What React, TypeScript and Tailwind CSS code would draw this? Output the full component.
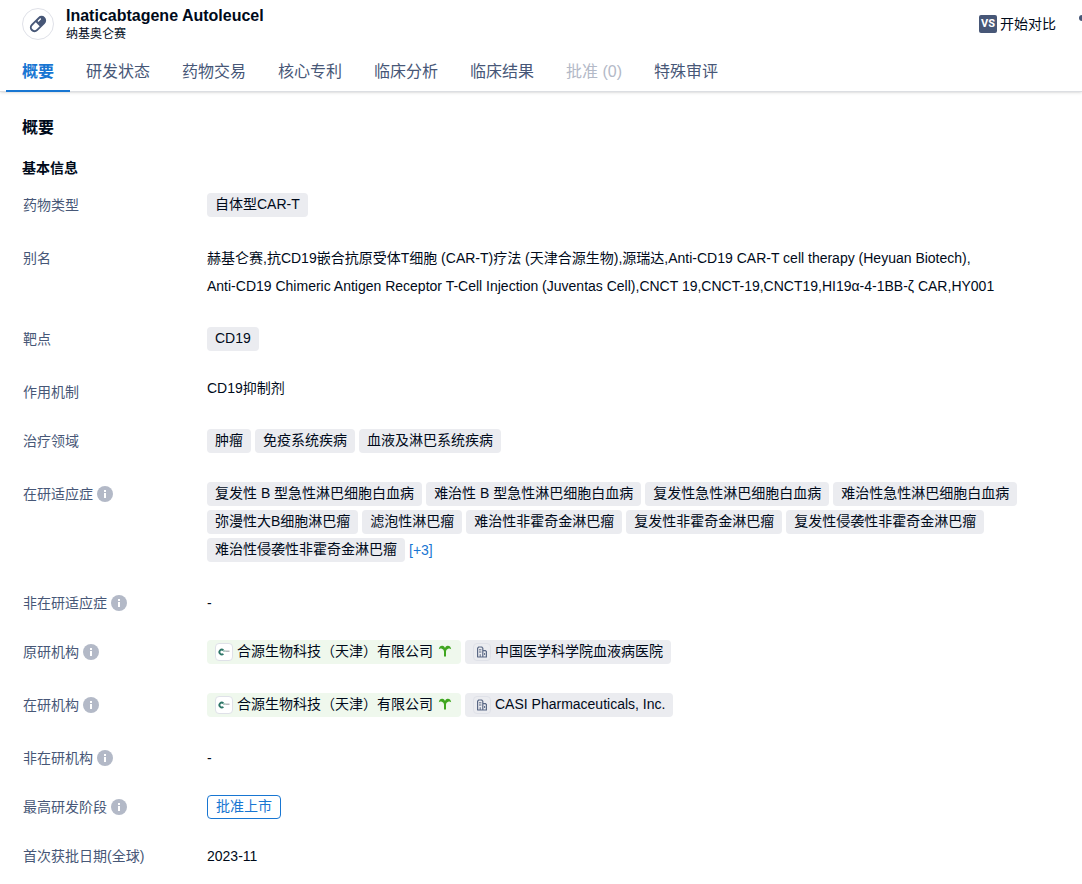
import type { ReactNode } from 'react';
import { clsx } from 'clsx';

const tabs = [
  { label: '概要', active: true },
  { label: '研发状态' },
  { label: '药物交易' },
  { label: '核心专利' },
  { label: '临床分析' },
  { label: '临床结果' },
  { label: '批准 (0)', disabled: true },
  { label: '特殊审评' },
];

const aliases = [
  '赫基仑赛,',
  '抗CD19嵌合抗原受体T细胞 (CAR-T)疗法 (天津合源生物),',
  '源瑞达,',
  'Anti-CD19 CAR-T cell therapy (Heyuan Biotech),',
  'Anti-CD19 Chimeric Antigen Receptor T-Cell Injection (Juventas Cell),',
  'CNCT 19,',
  'CNCT-19,',
  'CNCT19,',
  'HI19α-4-1BB-ζ CAR,',
  'HY001',
];

const areas = ['肿瘤', '免疫系统疾病', '血液及淋巴系统疾病'];

const indications = [
  '复发性 B 型急性淋巴细胞白血病',
  '难治性 B 型急性淋巴细胞白血病',
  '复发性急性淋巴细胞白血病',
  '难治性急性淋巴细胞白血病',
  '弥漫性大B细胞淋巴瘤',
  '滤泡性淋巴瘤',
  '难治性非霍奇金淋巴瘤',
  '复发性非霍奇金淋巴瘤',
  '复发性侵袭性非霍奇金淋巴瘤',
  '难治性侵袭性非霍奇金淋巴瘤',
];

function PillIcon() {
  return (
    <svg viewBox="0 0 18 18" className="w-[18px] h-[18px]" aria-hidden="true">
      <g transform="rotate(45 9 9)">
        <rect x="4.400" y="-0.600" width="9.200" height="19.200" rx="4.600" fill="#475777" />
        <path d="M6.200 9.400h5.600v4.400a2.800 2.800 0 0 1-5.600 0z" fill="#fff" />
        <path d="M7.200 3.800v2.800" stroke="#fff" strokeWidth="1.400" strokeLinecap="round" />
      </g>
    </svg>
  );
}

function InfoIcon() {
  return (
    <svg viewBox="0 0 16 16" className="w-4 h-4 shrink-0" aria-hidden="true">
      <circle cx="8" cy="8" r="8" fill="#b3b9c7" />
      <path d="M7 4h2v2H7zM7 7h2v5H7z" fill="#fff" />
    </svg>
  );
}

function BuildingIcon() {
  return (
    <svg viewBox="0 0 12 12" className="w-3 h-3" fill="none" stroke="#5a6885" aria-hidden="true">
      <path d="M1.600 11V2.200L2.600 1h3.200l1 1.200V11M6.800 4.600h2.600l1 1V11H1.200" strokeWidth="1.200" />
      <path d="M3 3.800h2.400M3 6h2.400M4.200 8.200V11M8.600 7v2" strokeWidth="1" />
    </svg>
  );
}

function HeyuanLogo() {
  return (
    <svg viewBox="0 0 14 14" className="w-[14px] h-[14px]" aria-hidden="true">
      <path d="M6.400 5.200A2.400 2.400 0 1 0 6.400 8.800" fill="none" stroke="#2f7668" strokeWidth="1.800" />
      <path d="M6 6h2.500" stroke="#68a08f" strokeWidth="1" />
      <path d="M8.500 6.200h4" stroke="#a5a8ad" strokeWidth="1.200" />
    </svg>
  );
}

function SproutIcon() {
  return (
    <svg viewBox="0 0 14 14" className="w-[14px] h-[14px]" fill="#3fa61f" aria-hidden="true">
      <path d="M.8 5.200C1.200 2.600 2.800 1.600 4.400 1.800 5.800 2 6.600 2.900 7 4 7.400 2.900 8.200 2 9.600 1.800c1.600-.2 3.200.8 3.600 3.400-1.100-.7-2-.8-3-.4-1.300.5-2.200 1.300-2.200 3V12.600H6V7.800c0-1.700-.9-2.500-2.200-3-1-.4-1.900-.3-3 .4z" />
    </svg>
  );
}

function Tag({ children }: { children: ReactNode }) {
  return (
    <span className="h-6 px-2 rounded bg-[#ebecf0] text-sm leading-[22px] whitespace-nowrap">{children}</span>
  );
}

function OrgTag({ name, local }: { name: string; local?: boolean }) {
  return (
    <a
      href="#org"
      className={clsx(
        'h-6 px-2 rounded flex text-sm leading-[22px] whitespace-nowrap',
        local ? 'bg-[#eff8ed]' : 'bg-[#ebecf0]'
      )}
    >
      <span
        className={clsx(
          'w-[18px] h-[18px] mt-[3px] mr-1 rounded border border-[#dfe1e8] flex items-center justify-center',
          local && 'bg-white'
        )}
      >
        {local ? <HeyuanLogo /> : <BuildingIcon />}
      </span>
      {name}
      {local && (
        <span className="w-4 ml-1 mt-1 flex justify-center">
          <SproutIcon />
        </span>
      )}
    </a>
  );
}

type RowProps = {
  label: string;
  info?: boolean;
  tight?: boolean;
  children: ReactNode;
};

function Row({ label, info, tight, children }: RowProps) {
  return (
    <div className={clsx('flex text-sm', tight ? 'mb-[21px]' : 'mb-[25px]')}>
      <dt className="w-[184px] shrink-0 h-7 flex items-center gap-1 text-[#475777]">
        {label}
        {info && <InfoIcon />}
      </dt>
      <dd className="flex-1 min-w-0">{children}</dd>
    </div>
  );
}

function TagList({ children }: { children: ReactNode }) {
  return <div className="flex flex-wrap gap-1 py-[2px]">{children}</div>;
}

export default function App() {
  return (
    <div className="bg-white text-[#000a1a] font-['Liberation_Sans','Noto_Sans_CJK_SC',sans-serif] overflow-x-hidden">
      <header className="border-b border-[#dcdee2] shadow-sm">
        <div className="flex items-center h-12 pl-[22px]">
          <div className="w-8 h-8 rounded-full border border-[#dfe1e8] flex items-center justify-center">
            <PillIcon />
          </div>
          <div className="ml-3">
            <h1 className="text-base leading-5 font-bold">Inaticabtagene Autoleucel</h1>
            <p className="text-xs leading-4">纳基奥仑赛</p>
          </div>
          <button className="ml-auto flex items-center gap-[3px] text-sm">
            <span className="w-[18px] h-[18px] rounded-xs bg-[#475777] text-white text-[11px] leading-[18px] font-bold text-center font-['Roboto',sans-serif]">
              VS
            </span>
            开始对比
          </button>
          <button className="ml-[23px] w-[3px] overflow-hidden" aria-label="more">
            <svg viewBox="0 0 18 18" className="w-[18px] h-[18px] max-w-none" fill="#475777">
              <circle cx="3" cy="3" r="3" />
              <circle cx="15" cy="3" r="3" />
            </svg>
          </button>
        </div>
        <nav className="flex pl-[6px] h-[43px] text-base text-[#475777]">
          {tabs.map((tab) => (
            <button
              key={tab.label}
              disabled={tab.disabled}
              className={clsx(
                'h-11 px-4 pt-[5px] border-b-2 whitespace-nowrap',
                tab.active ? 'border-[#1876d2] text-[#1876d2] font-bold' : 'border-transparent',
                tab.disabled && 'text-[#b3b9c7]'
              )}
            >
              {tab.label}
            </button>
          ))}
        </nav>
      </header>

      <main className="pl-[22px] pr-12 pt-6">
        <h2 className="text-base leading-6 font-bold">概要</h2>
        <h3 className="mt-[18px] text-sm leading-5 font-bold">基本信息</h3>

        <dl className="mt-[13px] pl-px">
          <Row label="药物类型">
            <TagList>
              <Tag>自体型CAR-T</Tag>
            </TagList>
          </Row>
          <Row label="别名">
            <p className="leading-7">
              {aliases.map((alias) => (
                <span key={alias} className="inline-block">{alias}</span>
              ))}
            </p>
          </Row>
          <Row label="靶点">
            <TagList>
              <Tag>CD19</Tag>
            </TagList>
          </Row>
          <Row label="作用机制" tight>
            <p className="leading-5">CD19抑制剂</p>
          </Row>
          <Row label="治疗领域">
            <TagList>
              {areas.map((area) => (
                <Tag key={area}>{area}</Tag>
              ))}
            </TagList>
          </Row>
          <Row label="在研适应症" info>
            <TagList>
              {indications.map((item) => (
                <Tag key={item}>{item}</Tag>
              ))}
              <button className="h-6 text-[#1876d2]">[+3]</button>
            </TagList>
          </Row>
          <Row label="非在研适应症" info tight>
            <p className="leading-7">-</p>
          </Row>
          <Row label="原研机构" info>
            <TagList>
              <OrgTag name="合源生物科技（天津）有限公司" local />
              <OrgTag name="中国医学科学院血液病医院" />
            </TagList>
          </Row>
          <Row label="在研机构" info>
            <TagList>
              <OrgTag name="合源生物科技（天津）有限公司" local />
              <OrgTag name="CASI Pharmaceuticals, Inc." />
            </TagList>
          </Row>
          <Row label="非在研机构" info tight>
            <p className="leading-7">-</p>
          </Row>
          <Row label="最高研发阶段" info tight>
            <TagList>
              <span className="h-6 px-2 rounded border border-[#1876d2] text-[#1876d2] leading-5">批准上市</span>
            </TagList>
          </Row>
          <Row label="首次获批日期(全球)" tight>
            <p className="leading-7">2023-11</p>
          </Row>
        </dl>
      </main>
    </div>
  );
}
